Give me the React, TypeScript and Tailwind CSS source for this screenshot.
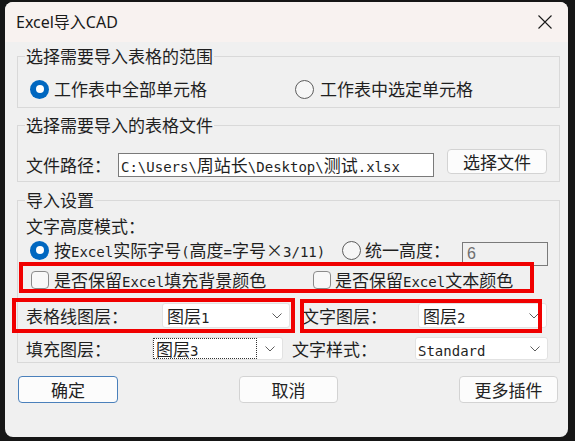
import React from 'react';

const ASCII = /^[\x20-\x7e]+$/;

// ASCII runs in half-width mono, everything else in the CJK face
const Mix: React.FC<{ text: string }> = ({ text }) => (
  <span>
    {text
      .split(/([\x20-\x7e]+)/)
      .filter(Boolean)
      .map((part, i) =>
        ASCII.test(part) ? (
          <span key={i} className="font-['DejaVu_Sans_Mono',monospace] text-[14px] leading-none">
            {part}
          </span>
        ) : (
          <span key={i}>{part}</span>
        )
      )}
  </span>
);

const Radio: React.FC<{ checked?: boolean }> = ({ checked }) =>
  checked ? (
    <span className="flex h-[19px] w-[19px] shrink-0 items-center justify-center rounded-full bg-[#0067c0]">
      <span className="h-[8px] w-[8px] rounded-full bg-white" />
    </span>
  ) : (
    <span className="h-[19px] w-[19px] shrink-0 rounded-full border border-[#5c5c5c] bg-[#f6f6f6]" />
  );

const Checkbox: React.FC = () => (
  <span className="h-[18px] w-[18px] shrink-0 rounded-[4px] border border-[#8b8b8b] bg-[#f8f8f8]" />
);

const Chevron: React.FC = () => (
  <svg width="10" height="6" viewBox="0 0 10 6" className="shrink-0">
    <path d="M0.5 0.5 L5 5 L9.5 0.5" fill="none" stroke="#5d5d5d" strokeWidth="1" />
  </svg>
);

const Combo: React.FC<{ className: string; children: React.ReactNode }> = ({ className, children }) => (
  <div
    className={`flex items-center justify-between rounded-[3px] border border-[#e2e2e2] bg-white pr-[7px] ${className}`}
  >
    {children}
    <Chevron />
  </div>
);

const Button: React.FC<{ className: string; children: React.ReactNode }> = ({ className, children }) => (
  <button
    className={`flex items-center justify-center rounded-[4px] border bg-[#fcfcfc] text-[17px] text-[#222] ${className}`}
  >
    {children}
  </button>
);

export default function App() {
  return (
    <div className="h-[441px] w-[575px] overflow-hidden bg-[#161616] pl-[5px] pt-[2px] font-['Noto_Sans_CJK_SC',sans-serif] text-[17px] leading-[20px] text-[#1f1f1f]">
      <div className="relative flex h-[435px] w-[563px] flex-col overflow-hidden rounded-[8px] bg-[#f0f0f0]">
        {/* title bar */}
        <div className="flex h-[40px] shrink-0 items-center justify-between bg-[#f8f2f0] pl-[11px] pr-[16px]">
          <span className="font-['Noto_Sans','Noto_Sans_CJK_SC',sans-serif] text-[16px] text-[#1a1a1a]">
            Excel导入CAD
          </span>
          <svg width="14" height="14" viewBox="0 0 14 14">
            <path d="M0.5 0.5 L13.5 13.5 M13.5 0.5 L0.5 13.5" stroke="#1a1a1a" strokeWidth="1.1" />
          </svg>
        </div>

        <div className="flex flex-col pl-[12px] pr-[8px]">
          {/* range */}
          <fieldset className="mt-[4px] border border-[#d9d9d9] pb-[8px] pl-[7px] pr-[8px]">
            <legend className="px-[1px]">选择需要导入表格的范围</legend>
            <div className="ml-[5px] mt-[13px] flex h-[20px] items-center">
              <div className="flex w-[265px] items-center gap-[5px]">
                <Radio checked />
                <span>工作表中全部单元格</span>
              </div>
              <div className="flex items-center gap-[6px]">
                <Radio />
                <span>工作表中选定单元格</span>
              </div>
            </div>
          </fieldset>

          {/* file */}
          <fieldset className="mt-[7px] border border-[#d9d9d9] pb-[4px] pl-[7px] pr-[8px]">
            <legend className="px-[1px]">选择需要导入的表格文件</legend>
            <div className="mt-[14px] flex h-[28px] items-start">
              <span className="ml-[1px] mt-[4px] w-[92px] leading-[24px]">文件路径：</span>
              <div className="mt-[4px] flex h-[24px] w-[316px] items-center border border-[#7a7a7a] bg-white pl-[2px]">
                <Mix text="C:\Users\周站长\Desktop\测试.xlsx" />
              </div>
              <Button className="ml-[13px] h-[25px] w-[100px] border-[#d3d3d3]">选择文件</Button>
            </div>
          </fieldset>

          {/* settings */}
          <fieldset className="mt-[8px] border border-[#d9d9d9] pb-[2px] pl-[7px] pr-[8px]">
            <legend className="px-[1px]">导入设置</legend>
            <div className="ml-[1px] mt-[6px] h-[20px]">文字高度模式：</div>
            <div className="ml-[5px] mt-[4px] flex h-[26px] items-start">
              <div className="flex h-[20px] w-[312px] items-center gap-[5px]">
                <Radio checked />
                <Mix text="按Excel实际字号(高度=字号×3/11)" />
              </div>
              <div className="flex h-[20px] w-[120px] items-center gap-[4px]">
                <Radio />
                <span>统一高度：</span>
              </div>
              <div className="mt-[2px] flex h-[24px] w-[86px] items-center border border-[#7a7a7a] pl-[4px] font-['Liberation_Sans',sans-serif] text-[16px] text-[#6e6e6e]">
                6
              </div>
            </div>
            <div className="ml-[6px] mt-[5px] flex h-[18px] items-center">
              <div className="flex w-[282px] items-center gap-[5px]">
                <Checkbox />
                <Mix text="是否保留Excel填充背景颜色" />
              </div>
              <div className="flex items-center gap-[4px]">
                <Checkbox />
                <Mix text="是否保留Excel文本颜色" />
              </div>
            </div>
            <div className="ml-[1px] mt-[14px] flex h-[25px] items-center">
              <span className="w-[136px]">表格线图层：</span>
              <Combo className="h-[25px] w-[128px] pl-[4px]">
                <Mix text="图层1" />
              </Combo>
              <span className="ml-[12px] w-[116px]">文字图层：</span>
              <Combo className="h-[25px] w-[129px] pl-[4px]">
                <Mix text="图层2" />
              </Combo>
            </div>
            <div className="ml-[1px] mt-[9px] flex h-[23px] items-center">
              <span className="w-[126px]">填充图层：</span>
              <Combo className="h-[23px] w-[131px]">
                <span className="flex h-[21px] w-[104px] items-center border border-dotted border-[#333] pl-[2px]">
                  <Mix text="图层3" />
                </span>
              </Combo>
              <span className="ml-[9px] w-[123px]">文字样式：</span>
              <Combo className="h-[23px] w-[133px] pl-[2px]">
                <Mix text="Standard" />
              </Combo>
            </div>
          </fieldset>

          {/* buttons */}
          <div className="mt-[13px] flex h-[27px] items-stretch">
            <Button className="ml-[1px] w-[100px] border-[#4a80bb]">确定</Button>
            <Button className="ml-[121px] w-[99px] border-[#d3d3d3]">取消</Button>
            <Button className="ml-[121px] w-[99px] border-[#d3d3d3]">更多插件</Button>
          </div>
        </div>

        {/* red annotation frames */}
        <div className="pointer-events-none absolute left-[14px] top-[260px] h-[31px] w-[515px] border-[4px] border-[#f00000]" />
        <div className="pointer-events-none absolute left-[7px] top-[296px] h-[35px] w-[283px] border-[4px] border-[#f00000]" />
        <div className="pointer-events-none absolute left-[295px] top-[297px] h-[34px] w-[242px] border-[4px] border-[#f00000]" />
      </div>
    </div>
  );
}
